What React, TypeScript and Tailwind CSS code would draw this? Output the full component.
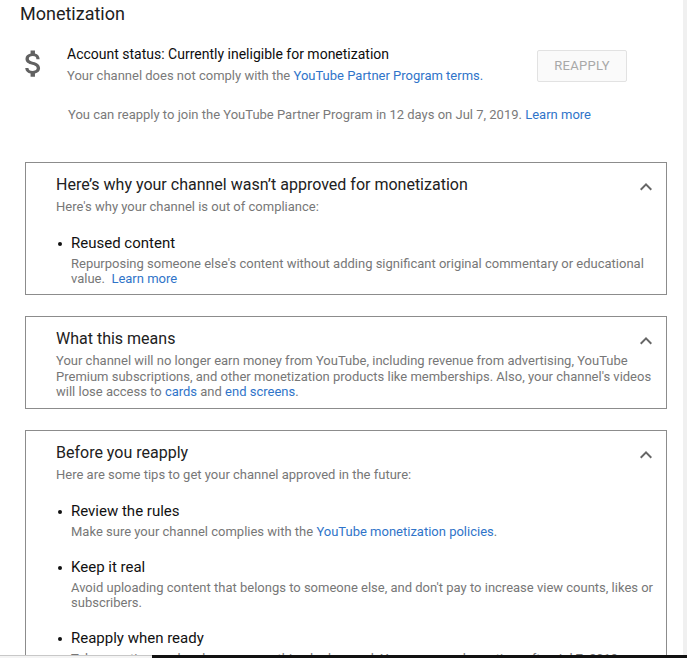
import React from 'react';

const LINK = 'text-[#2f74c9]';

const Chevron: React.FC = () => (
    <svg width="24" height="24" viewBox="0 0 24 24" className="shrink-0 fill-[#666666]">
        <path d="M12 8l-6 6 1.41 1.41L12 10.83l4.59 4.58L18 14z" />
    </svg>
);

const Dollar: React.FC = () => (
    <svg width="35" height="35" viewBox="0 0 24 24" className="fill-[#616161]">
        <path d="M11.8 10.9c-2.27-.59-3-1.2-3-2.15 0-1.09 1.01-1.85 2.7-1.85 1.78 0 2.44.85 2.5 2.1h2.21c-.07-1.72-1.12-3.3-3.21-3.81V3h-3v2.16c-1.94.42-3.5 1.68-3.5 3.61 0 2.31 1.91 3.46 4.7 4.13 2.5.6 3 1.48 3 2.41 0 .69-.49 1.79-2.7 1.79-2.06 0-2.87-.92-2.98-2.1h-2.2c.12 2.19 1.76 3.42 3.68 3.83V21h3v-2.15c1.95-.37 3.5-1.5 3.5-3.55 0-2.84-2.43-3.81-4.5-4.4z" />
    </svg>
);

// bordered, collapsible-looking section
const Card: React.FC<{ title: string; children: React.ReactNode }> = ({ title, children }) => (
    <div className="ml-[25px] w-[642px] border border-[#8c8c8c] pl-[30px] pr-[8px] pt-[12px] pb-[8px]">
        <div className="flex items-start justify-between">
            <h3 className="text-[16px] leading-[20px] text-[#212121]">{title}</h3>
            <Chevron />
        </div>
        <div>{children}</div>
    </div>
);

const Tip: React.FC<{ title: string; children: React.ReactNode }> = ({ title, children }) => (
    <div className="flex mt-[18px]">
        <div className="w-[15px] shrink-0 pt-[9px] pl-[2px]">
            <div className="w-[4px] h-[4px] rounded-full bg-[#111111]" />
        </div>
        <div>
            <div className="text-[15px] leading-[20px] text-[#111111]">{title}</div>
            <p className="mt-[3px] text-[13px] leading-[15px] text-[#777777]">{children}</p>
        </div>
    </div>
);

export default function App() {
    return (
        <div className="w-[687px] h-[658px] flex flex-col bg-white overflow-hidden" style={{ fontFamily: 'Roboto, "Liberation Sans", sans-serif' }}>
            <div className="flex h-[655px]">
                <div className="w-[683px] overflow-hidden">
                    <h1 className="pt-[2px] pl-[20px] text-[18px] leading-[24px] text-[#212121]">Monetization</h1>

                    {/* Account status */}
                    <div className="flex mt-[18px] ml-[16px]">
                        <div className="w-[51px] shrink-0 mt-[2px]">
                            <Dollar />
                        </div>
                        <div className="w-[470px] shrink-0">
                            <div className="text-[14px] leading-[20px] text-[#0d0d0d]">Account status: Currently ineligible for monetization</div>
                            <div className="mt-[2px] text-[13px] leading-[20px] text-[#7a7a7a]">
                                Your channel does not comply with the <span className={LINK}>YouTube Partner Program terms.</span>
                            </div>
                        </div>
                        <button className="mt-[6px] w-[90px] h-[32px] border border-[#e2e2e2] rounded-[2px] bg-[#fafafa] text-[13px] text-[#a8a8a8] tracking-[0.3px]">
                            REAPPLY
                        </button>
                    </div>

                    <p className="mt-[19px] ml-[68px] text-[13px] leading-[20px] text-[#7a7a7a]">
                        You can reapply to join the YouTube Partner Program in 12 days on Jul 7, 2019. <span className={LINK}>Learn more</span>
                    </p>

                    <div className="mt-[37px] flex flex-col gap-[21px]">
                        <Card title="Here’s why your channel wasn’t approved for monetization">
                            <p className="text-[13px] leading-[16px] text-[#777777]">Here's why your channel is out of compliance:</p>
                            <Tip title="Reused content">
                                Repurposing someone else's content without adding significant original commentary or educational value.&nbsp; <span className={LINK}>Learn more</span>
                            </Tip>
                        </Card>

                        <Card title="What this means">
                            <p className="text-[13px] leading-[15.5px] text-[#777777]">
                                Your channel will no longer earn money from YouTube, including revenue from advertising, YouTube Premium subscriptions, and other monetization products like memberships. Also, your channel's videos will lose access to <span className={LINK}>cards</span> and <span className={LINK}>end screens</span>.
                            </p>
                        </Card>

                        <Card title="Before you reapply">
                            <p className="text-[13px] leading-[16px] text-[#777777]">Here are some tips to get your channel approved in the future:</p>
                            <Tip title="Review the rules">
                                Make sure your channel complies with the <span className={LINK}>YouTube monetization policies</span>.
                            </Tip>
                            <Tip title="Keep it real">
                                Avoid uploading content that belongs to someone else, and don't pay to increase view counts, likes or subscribers.
                            </Tip>
                            <Tip title="Reapply when ready">
                                Take your time and make sure everything looks good. You can reapply anytime after Jul 7, 2019.
                            </Tip>
                        </Card>
                    </div>
                </div>
                <div className="w-[4px] bg-[#f0f0f0]" />
            </div>
            <div className="flex h-[3px]">
                <div className="w-[152px] border-t border-[#c8c8c8] bg-[#f4f4f4]" />
                <div className="flex-1 bg-[#111111]" />
            </div>
        </div>
    );
}
